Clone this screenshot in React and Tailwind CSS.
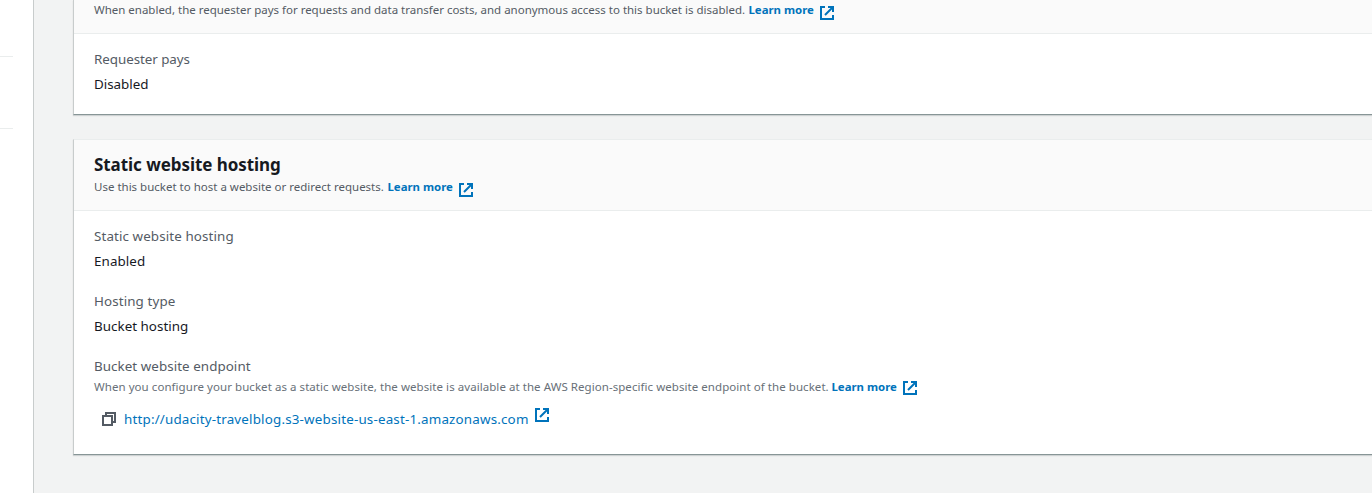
function ExternalIcon({ className = "" }) {
  return (
    <svg className={`size-[14px] shrink-0 ${className}`} viewBox="0 0 14 14" fill="none" stroke="#0073bb" strokeWidth="2">
      <path d="M5 1H1v12h12V9" />
      <path d="M8 1h5v5M13 1L5 9" />
    </svg>
  );
}

function CopyIcon() {
  return (
    <svg className="size-[14px] shrink-0" viewBox="0 0 14 14" fill="none" stroke="#545b64" strokeWidth="2">
      <path d="M1 4h9v9H1z" />
      <path d="M4 4V1h9v9h-3" />
    </svg>
  );
}

function LearnMore({ iconClass = "mt-[6px]" }) {
  return (
    <a className="flex font-bold text-[#0073bb]">
      <span className="w-[66px] pl-[0.5px] text-[11.4px]">Learn more</span>
      <ExternalIcon className={`ml-[6px] ${iconClass}`} />
    </a>
  );
}

function Field({ label, value, labelClass = "", valueClass = "" }) {
  return (
    <div className="flex h-[65px] flex-col gap-[5px] leading-5">
      <div className={`text-[13.4px] text-[#545b64] ${labelClass}`}>{label}</div>
      <div className={`text-[13.4px] text-[#16191f] ${valueClass}`}>{value}</div>
    </div>
  );
}

export default function App() {
  return (
    <div className="flex h-[493px] w-full overflow-hidden whitespace-nowrap bg-[#f2f3f3] font-['Noto_Sans',sans-serif]">
      <aside className="flex w-[34px] shrink-0 flex-col border-r border-[#c8cccc] bg-white">
        <div className="mt-14 h-px w-[13px] bg-[#eaeded]" />
        <div className="mt-[71px] h-px w-[13px] bg-[#eaeded]" />
      </aside>
      <main className="ml-[39px] flex min-w-0 flex-1 flex-col">
        <section className="h-[115px] border-b border-l border-b-[#879596] border-l-[#c8cccc] bg-white shadow-[0_1px_1px_0_rgba(0,28,36,0.15)]">
          <div className="flex h-[34px] border-b border-[#eaeded] bg-[#fafafa] pl-5 leading-5">
            <p className="w-[654px] text-[11.5px] tracking-[-0.008px] text-[#545b64]">
              When enabled, the requester pays for requests and data transfer costs, and anonymous access to this bucket is disabled.
            </p>
            <LearnMore />
          </div>
          <div className="pl-5 pt-[15px]">
            <Field label="Requester pays" value="Disabled" labelClass="tracking-[-0.06px]" valueClass="tracking-[-0.01px]" />
          </div>
        </section>
        <section className="mt-6 h-[316px] shrink-0 border-b border-l border-t border-b-[#879596] border-l-[#c8cccc] border-t-[#eaeded] bg-white shadow-[0_1px_1px_0_rgba(0,28,36,0.15)]">
          <div className="h-[71px] border-b border-[#eaeded] bg-[#fafafa] pl-5 pt-[14px]">
            <h2 className="h-[23px] text-[17px] font-bold leading-[22px] tracking-[-0.06px] text-[#16191f]">Static website hosting</h2>
            <div className="flex leading-5">
              <p className="w-[293px] text-[11.5px] text-[#545b64]">Use this bucket to host a website or redirect requests.</p>
              <LearnMore />
            </div>
          </div>
          <div className="pl-5 pt-[15px]">
            <Field label="Static website hosting" value="Enabled" labelClass="tracking-[0.1px]" valueClass="tracking-[0.08px]" />
            <Field label="Hosting type" value="Bucket hosting" labelClass="tracking-[0.1px]" valueClass="tracking-[0.02px]" />
            <div className="text-[13.4px] leading-5 tracking-[0.05px] text-[#545b64]">Bucket website endpoint</div>
            <div className="mt-px flex leading-5">
              <p className="w-[737px] text-[11.5px] tracking-[0.057px] text-[#687078]">
                When you configure your bucket as a static website, the website is available at the AWS Region-specific website endpoint of the bucket.
              </p>
              <LearnMore iconClass="mt-1" />
            </div>
            <div className="mt-3 flex h-5 items-center pl-2">
              <CopyIcon />
              <a className="ml-2 w-[411px] text-[13.4px] leading-5 tracking-[0.175px] text-[#0073bb]">http://udacity-travelblog.s3-website-us-east-1.amazonaws.com</a>
              <ExternalIcon className="mb-2" />
            </div>
          </div>
        </section>
      </main>
    </div>
  );
}
